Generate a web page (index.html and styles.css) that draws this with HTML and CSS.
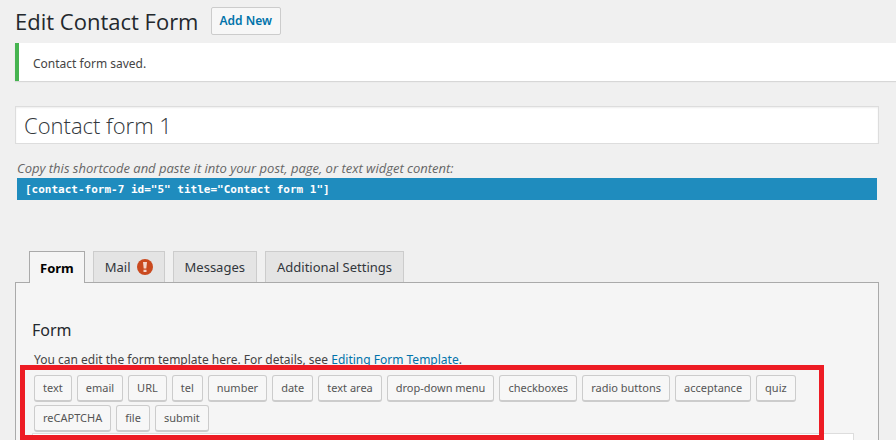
FILE: index.html
```html
<!DOCTYPE html>
<html lang="en">
<head>
<meta charset="utf-8">
<title>Edit Contact Form</title>
<link rel="stylesheet" href="styles.css">
</head>
<body>
<main class="page">
  <header class="page-header">
    <h1>Edit Contact Form</h1>
    <a class="add-new" href="#">Add New</a>
  </header>
  <div class="notice" role="status">Contact form saved.</div>
  <div class="content">
    <input class="title-input" type="text" value="Contact form 1" aria-label="Form title">
    <div class="shortcode">
      <label for="shortcode">Copy this shortcode and paste it into your post, page, or text widget content:</label>
      <input id="shortcode" type="text" readonly value='[contact-form-7 id="5" title="Contact form 1"]'>
    </div>
    <nav class="tabs">
      <a class="tab active" href="#form-panel">Form</a>
      <a class="tab" href="#mail">Mail
        <svg class="alert" viewBox="0 0 16 16" aria-hidden="true"><circle cx="8" cy="8" r="8" fill="#ca4a1f"/><path d="M6 3h4L9.300 9.500H6.700zM6.500 10.700h3v2.300h-3z" fill="#f3d5cb"/></svg>
      </a>
      <a class="tab" href="#messages">Messages</a>
      <a class="tab" href="#settings">Additional Settings</a>
    </nav>
    <section class="panel" id="form-panel">
      <h2>Form</h2>
      <p class="help">You can edit the form template here. For details, see <a href="#">Editing Form Template</a>.</p>
      <div class="editor">
        <div class="tags">
          <button type="button">text</button>
          <button type="button">email</button>
          <button type="button">URL</button>
          <button type="button">tel</button>
          <button type="button">number</button>
          <button type="button">date</button>
          <button type="button">text area</button>
          <button type="button">drop-down menu</button>
          <button type="button">checkboxes</button>
          <button type="button">radio buttons</button>
          <button type="button">acceptance</button>
          <button type="button">quiz</button>
          <button type="button">reCAPTCHA</button>
          <button type="button">file</button>
          <button type="button">submit</button>
        </div>
        <textarea aria-label="Form template"></textarea>
        <div class="highlight"></div>
      </div>
    </section>
  </div>
</main>
</body>
</html>
```
FILE: styles.css
```css
* { box-sizing: border-box; }
html { height: 100%; overflow: hidden; }
body {
  margin: 0;
  height: 100%;
  overflow: hidden;
  background: #f0f0f0;
  color: #444;
  font: 12px/18px "Noto Sans", "Open Sans", sans-serif;
}
a { color: #0073aa; text-decoration: none; }
input, textarea, button { font: inherit; color: inherit; margin: 0; border-radius: 0; }

.page { padding-left: 15px; }
.page-header { display: flex; align-items: center; gap: 12px; height: 43px; padding-bottom: 2px; }
h1 { margin: 0; font-size: 22px; line-height: 28px; font-weight: 400; color: #23282d; font-family: "Open Sans", sans-serif; }
.add-new {
  padding: 4px 8px;
  border: 1px solid #ccc;
  border-radius: 2px;
  background: #f7f7f7;
  font-weight: 600;
}
.notice {
  padding: 12px 14px 8px;
  border-left: 4px solid #46b450;
  background: #fff;
  box-shadow: 0 1px 1px rgba(0, 0, 0, .1);
}
.content { padding: 25px 17px 0 0; }
.title-input {
  display: block;
  width: 100%;
  height: 38px;
  padding: 0 8px;
  border: 1px solid #ddd;
  background: #fff;
  box-shadow: inset 0 1px 2px rgba(0, 0, 0, .07);
  font-family: "Open Sans", sans-serif;
  font-size: 22px;
  font-weight: 300;
  color: #32373c;
}
.shortcode { padding: 14px 2px 0; }
.shortcode label { display: block; height: 20px; font: italic 13px/20px "Open Sans", sans-serif; color: #666; }
.shortcode input {
  display: block;
  width: 100%;
  height: 22px;
  padding: 0 8px;
  border: 0;
  background: #1f8cbe;
  color: #fff;
  font: bold 11px "DejaVu Sans Mono", monospace;
}
.tabs { display: flex; gap: 8px; margin-top: 51px; padding-left: 14px; }
.tab {
  display: flex;
  align-items: center;
  gap: 6px;
  height: 31px;
  padding: 0 11px;
  border: 1px solid #ccc;
  border-bottom: 0;
  background: #e4e4e4;
  color: #32373c;
  font-size: 13px;
}
.tab.active {
  z-index: 1;
  height: 32px;
  margin-bottom: -1px;
  padding: 0 10px;
  border-color: #aaa;
  background: #f5f5f5;
  color: #000;
  font-weight: 700;
}
.alert { width: 16px; height: 16px; }
.panel {
  padding: 34px 24px 20px 16px;
  border: 1px solid #aaa;
  background: #f5f5f5;
}
h2 { margin: 0; font-size: 16px; line-height: 26px; font-weight: 400; color: #23282d; }
.help { margin: 7px 2px 0; line-height: 20px; }
.editor { position: relative; padding-top: 5px; }
.tags { display: flex; flex-wrap: wrap; gap: 3px 5px; padding: 0 2px; }
.tags button {
  height: 27px;
  padding: 0 8px;
  border: 1px solid #ccc;
  border-bottom-width: 2px;
  border-radius: 3px;
  background: #f7f7f7;
  color: #555;
  font-size: 11px;
}
.editor textarea {
  display: block;
  width: 100%;
  height: 300px;
  margin-top: 1px;
  border: 1px solid #ddd;
  background: #fff;
  resize: none;
}
.highlight {
  position: absolute;
  top: -5px;
  left: -12px;
  right: 30px;
  height: 75px;
  border: 5px solid #ed1c24;
  pointer-events: none;
}
```
